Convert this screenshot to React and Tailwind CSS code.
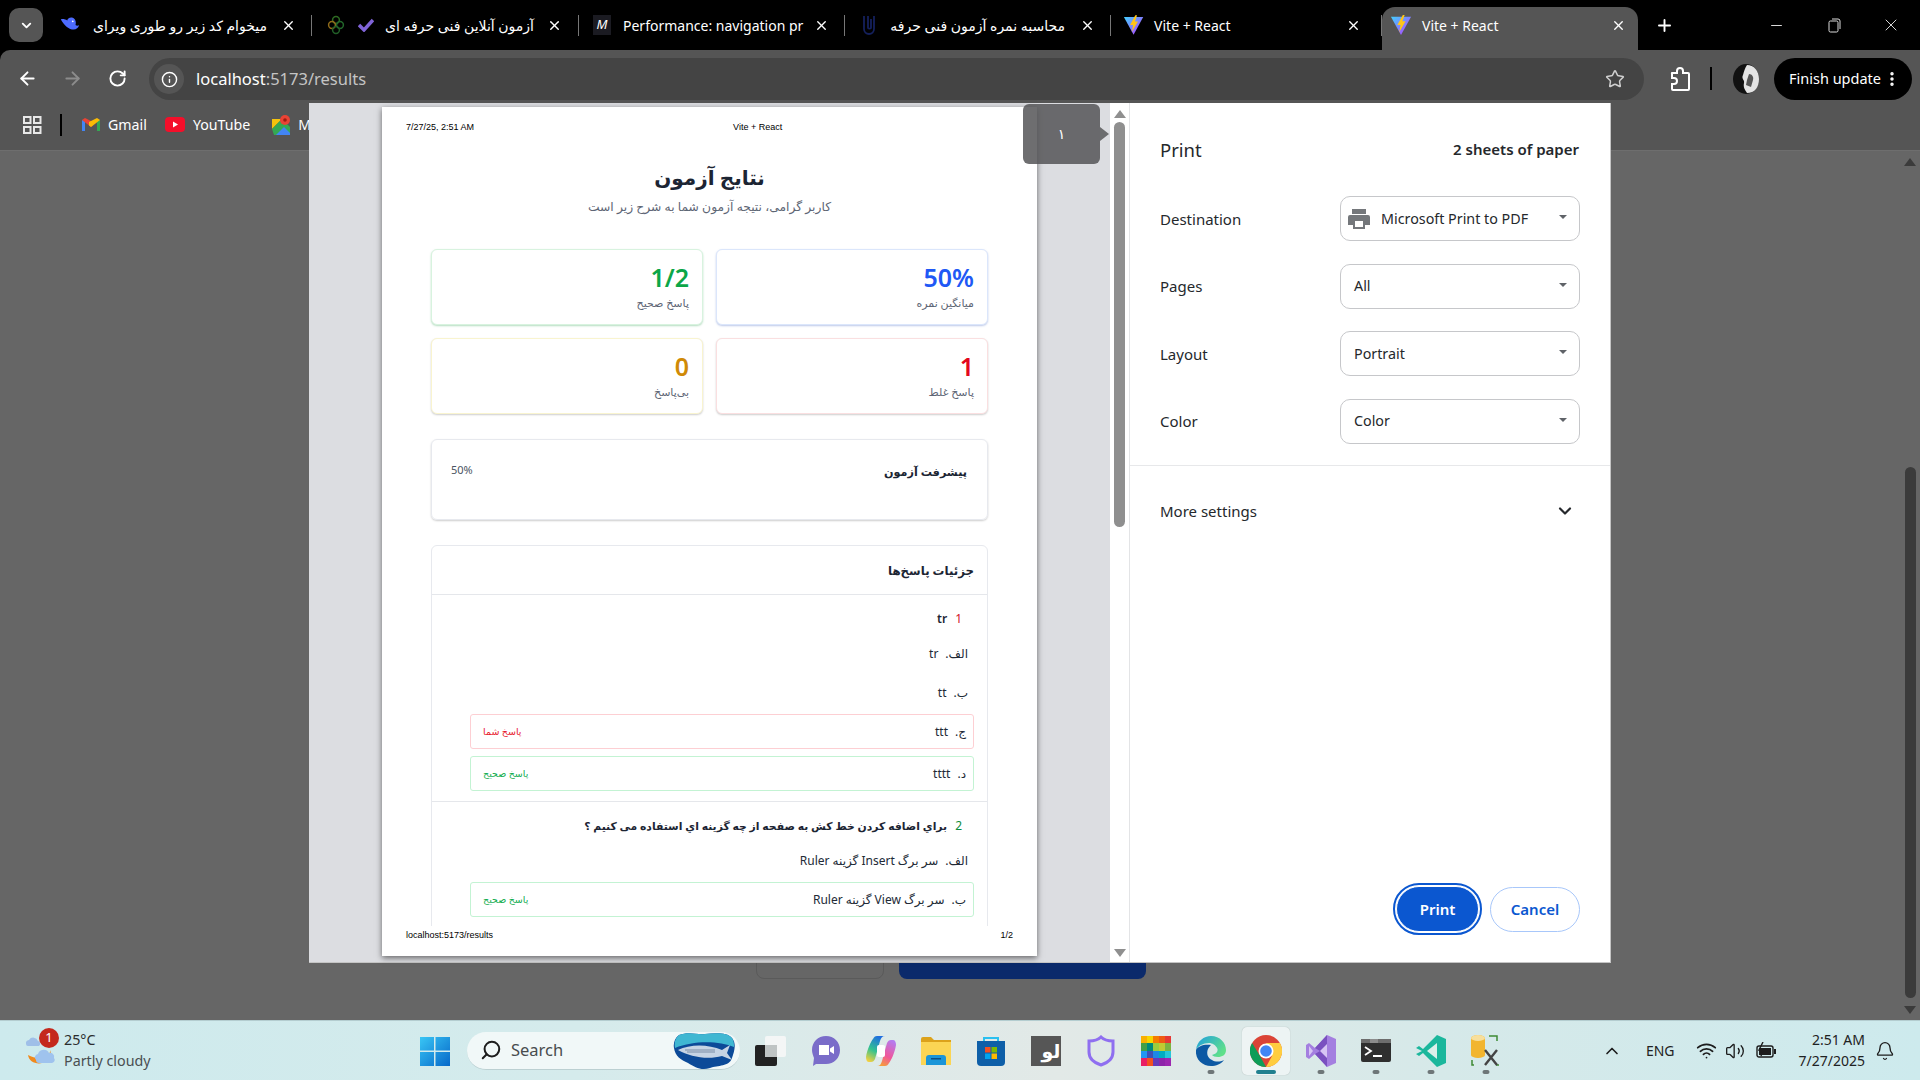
import React from "react";
import { ArrowLeft, ArrowRight, RotateCw, Star, Info, Plus, X, Minus, Search, ChevronUp, ChevronDown, Bell, Wifi, Volume2, EllipsisVertical } from "lucide-react";

const ui = "font-['Noto_Sans','DejaVu_Sans',sans-serif]";

const Sep = () => <div className="w-px h-[21px] bg-[#777] shrink-0" />;

const ViteIcon = ({ size = 22 }) => (
  <svg width={size} height={size} viewBox="0 0 24 24">
    <defs>
      <linearGradient id="vt" x1="0" y1="0" x2="1" y2="1">
        <stop offset="0" stopColor="#41d1ff" />
        <stop offset="1" stopColor="#bd34fe" />
      </linearGradient>
    </defs>
    <path d="M1 3 L23 3 L12 23 Z" fill="url(#vt)" />
    <path d="M14 1 L8 12 L11.5 12 L10 20 L17 8 L13.5 8 L16 1 Z" fill="#ffc517" />
  </svg>
);

const Tab = ({ width, icon, title, rtl, titleClass, right = "pr-3" }) => (
  <div className={`${width} h-[36px] flex items-center shrink-0`}>
    <div className={`flex-1 flex items-center min-w-0 pl-3 ${right}`}>
      {icon}
      <div className={`${titleClass} whitespace-nowrap text-[14px] text-white`} dir={rtl ? "rtl" : "ltr"}>
        {title}
      </div>
      <div className="flex-1" />
      <X size={15} strokeWidth={2.2} className="text-white shrink-0" />
    </div>
    <Sep />
  </div>
);

const TabStrip = () => (
  <div className="h-[50px] bg-black flex items-start shrink-0 relative pt-[7px]">
    <div className="w-[34px] h-[34px] mt-[1px] ml-[9px] mr-[7px] rounded-[10px] bg-[#555] flex items-center justify-center shrink-0">
      <ChevronDown size={15} strokeWidth={3} className="text-white" />
    </div>
    <Tab
      width="w-[262px]"
      rtl
      right="pr-[15px]"
      titleClass="w-[176px] ml-[10px]"
      title="میخوام کد زیر رو طوری ویرای"
      icon={
        <svg width="22" height="22" viewBox="0 0 24 24" className="shrink-0 ml-[-3px]">
          <path d="M2 6c4 7 9 11 14 11 3 0 5-2 6-5-1 1-3 1-4 0 1-3 0-7-3-8-3-1-6 1-6 3-2-1-5-2-7-1z" fill="#4d6bfe" />
          <circle cx="15" cy="8" r="1" fill="#fff" />
        </svg>
      }
    />
    <Tab
      width="w-[267px]"
      rtl
      right="pr-[16px]"
      titleClass="w-[154px] ml-[6px]"
      title="آزمون آنلاین فنی حرفه ای"
      icon={
        <span className="flex items-center shrink-0 gap-[13px] ml-[3px]">
          <svg width="18" height="20" viewBox="0 0 18 20">
            <circle cx="9" cy="5" r="3.4" fill="none" stroke="#2e6b22" strokeWidth="1.5" />
            <circle cx="5" cy="10" r="3.4" fill="none" stroke="#8f6b1a" strokeWidth="1.5" />
            <circle cx="13" cy="10" r="3.4" fill="none" stroke="#22682b" strokeWidth="1.5" />
            <circle cx="9" cy="15" r="3.4" fill="none" stroke="#215f27" strokeWidth="1.5" />
          </svg>
          <svg width="16" height="14" viewBox="0 0 16 14">
            <path d="M1 7 L6 12 L15 2" fill="none" stroke="#8064d8" strokeWidth="3.4" />
          </svg>
        </span>
      }
    />
    <Tab
      width="w-[266px]"
      right="pr-[15px]"
      titleClass="w-[178px] ml-[12px]"
      title="Performance: navigation pr"
      icon={
        <span className="w-[18px] h-[20px] bg-[#1b1b22] flex items-center justify-center text-[13px] italic text-white shrink-0 ml-[2px]">
          M
        </span>
      }
    />
    <Tab
      width="w-[266px]"
      rtl
      right="pr-[15px]"
      titleClass="w-[165px] ml-[23px]"
      title="محاسبه نمره آزمون فنی حرفه"
      icon={
        <svg width="16" height="24" viewBox="0 0 16 24" className="shrink-0 ml-[4px]">
          <path d="M3 3v13a5 5 0 0 0 10 0V3M7 3v12a2 2 0 0 0 3 0V6" fill="none" stroke="#14205c" strokeWidth="1.8" />
        </svg>
      }
    />
    <Tab
      width="w-[271px]"
      right="pr-[20px]"
      titleClass="w-[200px] ml-[10px]"
      title="Vite + React"
      icon={<ViteIcon />}
    />
    <div className="w-[256px] h-[43px] bg-[#555] rounded-t-[13px] flex items-center pl-[8px] pr-[12px] pb-[7px] shrink-0 relative">
      <ViteIcon />
      <span className="ml-[10px] text-[14px] text-white">Vite + React</span>
      <div className="flex-1" />
      <X size={15} strokeWidth={2.2} className="text-white" />
    </div>
    <div className="h-[36px] flex items-center ml-[17px]">
      <Plus size={19} strokeWidth={2.4} className="text-white" />
    </div>
    <div className="flex-1" />
    <div className="h-[36px] flex items-center text-white">
      <Minus size={17} strokeWidth={1.2} />
      <svg width="15" height="15" viewBox="0 0 15 15" className="ml-[42px]">
        <rect x="2" y="3" width="9" height="11" rx="1.4" fill="none" stroke="#ddd" strokeWidth="1" />
        <path d="M5 1h6a2 2 0 0 1 2 2v8" fill="none" stroke="#ddd" strokeWidth="1" />
      </svg>
      <X size={20} strokeWidth={1} className="ml-[39px] mr-[19px]" />
    </div>
  </div>
);

const Toolbar = () => (
  <div className="h-[53px] bg-[#555] flex items-start pt-[8px] shrink-0 rounded-tl-[10px]">
    <ArrowLeft size={21} strokeWidth={2.2} className="text-white ml-[17px] mt-[10px]" />
    <ArrowRight size={21} strokeWidth={2.2} className="text-[#8c8c8c] ml-[24px] mt-[10px]" />
    <RotateCw size={19} strokeWidth={2.4} className="text-white ml-[25px] mt-[11px]" />
    <div className="w-[1495px] h-[42px] rounded-full bg-[#444] ml-[22px] flex items-center pl-[5px] pr-[19px]">
      <div className="w-[30px] h-[30px] rounded-full bg-[#555] flex items-center justify-center">
        <Info size={17} strokeWidth={2} className="text-white" />
      </div>
      <span className="ml-[12px] text-[16.5px] text-white">
        localhost<span className="text-[#c4c4c4]">:5173/results</span>
      </span>
      <div className="flex-1" />
      <Star size={20} strokeWidth={1.8} className="text-[#cfcfcf]" />
    </div>
    <svg width="22" height="24" viewBox="0 0 22 24" className="ml-[25px] mt-[9px]">
      <path d="M3 6h5V4a3 3 0 0 1 6 0v2h5a1 1 0 0 1 1 1v15a1 1 0 0 1-1 1H4a1 1 0 0 1-1-1v-5h2a3 3 0 0 0 0-6H3V7a1 1 0 0 1 0-1z" fill="none" stroke="#fff" strokeWidth="2" />
    </svg>
    <div className="w-[2px] h-[23px] bg-black ml-[19px] mt-[9px]" />
    <svg width="26" height="30" viewBox="0 0 26 30" className="ml-[21px] mt-[6px]">
      <ellipse cx="13" cy="15" rx="13" ry="15" fill="#111" />
      <path d="M14 1c7 0 12 6 12 14s-4 14-12 14c-2-3-4-6-3-10 1-3-3-4-1-8 1-4 2-7 4-10z" fill="#e4e4e4" />
      <path d="M16 10c3 0 5 3 4 6l-2 7-5-2 1-5z" fill="#555" />
    </svg>
    <div className="w-[138px] h-[42px] rounded-full bg-black ml-[15px] flex items-center pl-[15px] text-white text-[14.5px]">
      Finish update
      <EllipsisVertical size={18} strokeWidth={2.6} className="ml-[2px]" />
    </div>
  </div>
);

const Bookmarks = () => (
  <div className="h-[48px] bg-[#555] border-b border-[#6e6e6e] flex items-center shrink-0 text-white text-[14.2px] pb-[4px]">
    <svg width="19" height="18" viewBox="0 0 19 18" className="ml-[23px]">
      <g fill="none" stroke="#e8e8e8" strokeWidth="2">
        <rect x="1" y="1" width="6.5" height="6" />
        <rect x="11" y="1" width="6.5" height="6" />
        <rect x="1" y="11" width="6.5" height="6" />
        <rect x="11" y="11" width="6.5" height="6" />
      </g>
    </svg>
    <div className="w-[2px] h-[22px] bg-black ml-[18px]" />
    <svg width="18" height="14" viewBox="0 0 18 14" className="ml-[20px]">
      <path d="M0 13V2l3 1v10z" fill="#4285f4" />
      <path d="M18 13V2l-3 1v10z" fill="#34a853" />
      <path d="M0 2 9 9l2-1.5V4L3 0z" fill="#ea4335" />
      <path d="M18 2 9 9l-2-1.5V4l8-4z" fill="#fbbc04" />
    </svg>
    <span className="ml-[8px]">Gmail</span>
    <svg width="20" height="15" viewBox="0 0 20 15" className="ml-[18px]">
      <rect width="20" height="15" rx="4" fill="#f40f2a" />
      <path d="M8 4.5v6l5-3z" fill="#fff" />
    </svg>
    <span className="ml-[8px]">YouTube</span>
    <svg width="18" height="20" viewBox="0 0 18 20" className="ml-[22px]">
      <path d="M0 4h10l-10 10z" fill="#f4c20d" />
      <path d="M0 14 10 4l8 8v8H2z" fill="#34a853" />
      <path d="M4 20 12 12l6 6v2z" fill="#4285f4" />
      <circle cx="13" cy="5" r="5" fill="#ea4335" />
      <circle cx="13" cy="5" r="1.8" fill="#9c1c12" />
    </svg>
    <span className="ml-[8px]">Maps</span>
  </div>
);

const StatCard = ({ value, label, color, border, shadow }) => (
  <div className={`h-[76px] rounded-[6px] border bg-white pl-[14px] pr-[13px] pt-[11px] flex flex-col items-start ${border} ${shadow}`}>
    <div className={`text-[25px] leading-[32px] font-semibold ${color}`}>{value}</div>
    <div className="text-[11px] leading-[18px] mt-[1px] text-[#5e6675]">{label}</div>
  </div>
);

const Option = ({ mark, text }) => (
  <div className="flex gap-[7px] text-[12px] leading-[20px] text-[#222a36] pr-[6px] mb-[19px]">
    <span>{mark}</span>
    <span>{text}</span>
  </div>
);

const BoxOption = ({ mark, text, note, tone, first }) => (
  <div className={`h-[35px] rounded-[3px] border flex items-center justify-between px-[7px] mb-[7px] text-[12px] text-[#222a36] bg-white ${first ? "-mt-[8px]" : ""} ${tone === "red" ? "border-[#fdcfd3]" : "border-[#c3f3d3]"}`}>
    <span className="flex gap-[7px]">
      <span>{mark}</span>
      <span>{text}</span>
    </span>
    <span className={`text-[9.5px] pl-[5px] pt-[1px] ${tone === "red" ? "text-[#e7182b]" : "text-[#12ad50]"}`}>{note}</span>
  </div>
);

const PrintPage = () => (
  <div className={`w-[655px] h-[849px] bg-white shadow-[0_2px_6px_rgba(0,0,0,0.55)] flex flex-col overflow-hidden ${ui}`}>
    <div className="h-[52px] px-[24px] pt-[13px] text-[9px] leading-[14px] text-black font-['Liberation_Sans',sans-serif] flex shrink-0">
      <span>7/27/25, 2:51 AM</span>
      <span className="ml-[259px]">Vite + React</span>
    </div>
    <div dir="rtl" className="flex-1 px-[49px] overflow-hidden">
      <div className="text-center">
        <h1 className="text-[20px] leading-[37px] font-bold text-[#1c2533]">نتایج آزمون</h1>
        <p className="text-[12.3px] leading-[22px] text-[#5e6675]">کاربر گرامی، نتیجه آزمون شما به شرح زیر است</p>
      </div>
      <div className="grid grid-cols-2 gap-x-[13px] gap-y-[13px] mt-[31px]">
        <StatCard value="50%" label="میانگین نمره" color="text-[#2058f5]" border="border-[#dbe6fb]" shadow="shadow-[0_1px_2px_rgba(90,120,200,0.4)]" />
        <StatCard value="1/2" label="پاسخ صحیح" color="text-[#0ba648]" border="border-[#d8f3df]" shadow="shadow-[0_1px_2px_rgba(70,170,100,0.4)]" />
        <StatCard value="1" label="پاسخ غلط" color="text-[#e3071c]" border="border-[#fadfe0]" shadow="shadow-[0_1px_2px_rgba(0,0,0,0.2)]" />
        <StatCard value="0" label="بی‌پاسخ" color="text-[#d08a06]" border="border-[#f9f4cf]" shadow="shadow-[0_1px_2px_rgba(0,0,0,0.2)]" />
      </div>
      <div className="h-[81px] mt-[25px] rounded-[6px] border border-[#e7e9ee] shadow-[0_1px_2px_rgba(0,0,0,0.2)] flex items-start justify-between pt-[20px] px-[20px]">
        <span className="text-[11.2px] leading-[24px] font-bold text-[#1c2533]">پیشرفت آزمون</span>
        <span className="text-[11px] leading-[20px] text-[#4b5563] -ml-[1px]">50%</span>
      </div>
      <div className="h-[420px] mt-[25px] rounded-t-[6px] border border-[#e7e9ee] overflow-hidden">
        <div className="h-[49px] border-b border-[#e5e7eb] flex items-center px-[13px] pt-[2px] text-[11.8px] font-bold text-[#1c2533]">
          جزئیات پاسخ‌ها
        </div>
        <div className="h-[207px] border-b border-[#e5e7eb] pt-[14px] px-[13px] flex flex-col">
          <div className="flex items-center gap-[8px] pr-[12px] text-[12px] leading-[20px] font-semibold text-[#1c2533] mb-[15px]">
            <span className="text-[#d2101f] font-normal">1</span>
            <span>tr</span>
          </div>
          <div className="pl-[25px]">
            <Option mark="الف." text="tr" />
            <Option mark="ب." text="tt" />
            <BoxOption mark="ج." text="ttt" note="پاسخ شما" tone="red" first />
            <BoxOption mark="د." text="tttt" note="پاسخ صحیح" tone="green" />
          </div>
        </div>
        <div className="pt-[14px] px-[13px] flex flex-col">
          <div className="flex items-center gap-[8px] pr-[12px] text-[10.8px] leading-[20px] font-bold text-[#1c2533] mb-[15px]">
            <span className="text-[#0c8c3c] font-normal text-[12px]">2</span>
            <span>براي اضافه كردن خط كش به صفحه از چه گزينه اي استفاده مى كنيم ؟</span>
          </div>
          <div className="pl-[25px]">
            <Option mark="الف." text="سر برگ Insert گزينه Ruler" />
            <BoxOption mark="ب." text="سر برگ View گزينه Ruler" note="پاسخ صحیح" tone="green" first />
          </div>
        </div>
      </div>
    </div>
    <div className="h-[30px] px-[24px] flex justify-between items-start pt-[2px] text-[9px] leading-[14px] text-black font-['Liberation_Sans',sans-serif] shrink-0">
      <span>localhost:5173/results</span>
      <span>1/2</span>
    </div>
  </div>
);

const Field = ({ label, value, printer }) => (
  <div className="flex items-center justify-between mb-[22.5px]">
    <span className="text-[15px] text-[#25282c] pt-[1px]">{label}</span>
    <div className="w-[240px] h-[45px] rounded-[10px] border border-[#c6c7ca] flex items-center pl-[13px] pr-[12px] text-[14.3px] text-[#25282c]">
      {printer && (
        <svg width="22" height="20" viewBox="0 0 22 20" className="-ml-[6px] mr-[11px]">
          <path d="M4 0h14v5H4z M2 6h18a2 2 0 0 1 2 2v8h-5v4H5v-4H0V8a2 2 0 0 1 2-2z" fill="#74777b" />
          <rect x="7" y="12" width="8" height="6" fill="#fff" />
        </svg>
      )}
      <span>{value}</span>
      <div className="flex-1" />
      <div className="w-0 h-0 border-x-[4.5px] border-x-transparent border-t-[4.5px] border-t-[#5f6368] mb-[3px]" />
    </div>
  </div>
);

const PrintSidebar = () => (
  <div className={`w-[481px] h-full bg-white border-l border-[#e3e4e6] flex flex-col ${ui}`}>
    <div className="h-[93px] flex items-center justify-between pl-[30px] pr-[31px]">
      <span className="text-[18.5px] text-[#25282c]">Print</span>
      <span className="text-[15px] font-semibold text-[#25282c]">2 sheets of paper</span>
    </div>
    <div className="pl-[30px] pr-[30px]">
      <Field label="Destination" value="Microsoft Print to PDF" printer />
      <Field label="Pages" value="All" />
      <Field label="Layout" value="Portrait" />
      <Field label="Color" value="Color" />
    </div>
    <div className="border-t border-[#e7e8ea] -mt-[1px] h-[92px] flex items-center justify-between pl-[30px] pr-[35px]">
      <span className="text-[15px] text-[#25282c]">More settings</span>
      <ChevronDown size={20} strokeWidth={2.6} className="text-[#25282c] -mt-[2px]" />
    </div>
    <div className="flex-1" />
    <div className="flex items-center justify-end gap-[8px] pr-[30px] pb-[27px]">
      <button className="w-[89px] h-[52px] rounded-full border-2 border-[#0b57d0] p-[1px]">
        <span className="w-full h-full rounded-full bg-[#0b57d0] flex items-center justify-center text-white text-[15px] font-semibold border border-white">Print</span>
      </button>
      <button className="w-[90px] h-[45px] rounded-full border border-[#a8c7fa] text-[#0b57d0] text-[15px] font-semibold">Cancel</button>
    </div>
  </div>
);

const PrintDialog = () => (
  <div className="absolute left-[309px] top-[103px] w-[1302px] h-[860px] flex bg-[#dcdde1] border-b border-r border-[#c4c4c4]">
    <div className="w-[820px] h-full relative pl-[73px] pt-[4px]">
      <PrintPage />
      <div className="absolute left-[714px] top-[1px] w-[77px] h-[60px] rounded-[6px] bg-[rgba(85,85,87,0.85)] flex items-center justify-center text-white text-[14px] font-['DejaVu_Sans',sans-serif]">
        ۱
        <div className="absolute -right-[9px] top-[23px] w-0 h-0 border-y-[7px] border-y-transparent border-l-[9px] border-l-[#6c6d6f]" />
      </div>
      <div className="absolute right-0 top-0 bottom-0 w-[19px] bg-white flex flex-col items-center pt-[7px]">
        <div className="w-0 h-0 border-x-[6px] border-x-transparent border-b-[8px] border-b-[#8f8f8f]" />
        <div className="w-[11px] h-[405px] rounded-full bg-[#8f8f8f] mt-[4px]" />
        <div className="flex-1" />
        <div className="w-0 h-0 border-x-[6px] border-x-transparent border-t-[8px] border-t-[#8f8f8f] mb-[5px]" />
      </div>
    </div>
    <PrintSidebar />
  </div>
);

const PageBehind = () => (
  <div className="flex-1 bg-[#666] relative min-h-0">
    <div className="absolute right-0 top-0 bottom-0 w-[20px] flex flex-col items-center pt-[7px]">
      <div className="w-0 h-0 border-x-[6px] border-x-transparent border-b-[8px] border-b-[#3b3b3b]" />
      <div className="w-[11px] h-[531px] rounded-full bg-[#3b3b3b] mt-[301px]" />
      <div className="flex-1" />
      <div className="w-0 h-0 border-x-[6px] border-x-transparent border-t-[8px] border-t-[#3b3b3b] mb-[6px]" />
    </div>
    <div className="flex pt-[780px] pl-[756px] gap-[15px]">
      <div className="w-[128px] h-[48px] rounded-[8px] border border-[#5a5a5a]" />
      <div className="w-[247px] h-[48px] rounded-[8px] bg-[#0b2a6b]" />
    </div>
  </div>
);

const AppIcon = ({ children, active, dot }) => (
  <div className={`w-[48px] h-[48px] mx-[3.5px] rounded-[5px] flex items-center justify-center relative shrink-0 ${active ? "bg-white/50 shadow-[0_0_1px_rgba(0,0,0,0.3)]" : ""}`}>
    {children}
    {dot && <div className={`absolute bottom-[1px] left-1/2 -translate-x-1/2 h-[3.5px] rounded-full ${active ? "w-[20px] bg-[#21808f]" : "w-[7px] bg-[#6e7678]"}`} />}
  </div>
);

const gridColors = [
  "#f9b000", "#f7d600", "#f57c00", "#ef5b12", "#e53935",
  "#43a047", "#00897b", "#9ccc3c", "#c0ca33", "#7cb342",
  "#2196f3", "#3f51b5", "#1e88e5", "#00acc1", "#26c6da",
  "#e91e63", "#f4511e", "#673ab7", "#8e24aa", "#9c27b0",
];

const Taskbar = () => (
  <div className={`h-[60px] shrink-0 border-t border-[#b4cdd0] bg-[linear-gradient(90deg,#cdeaed_0%,#d5ebec_30%,#e2e9e7_55%,#d6e9e9_75%,#cdeaed_100%)] flex items-center relative ${ui}`}>
    <div className="w-[420px] flex items-center pl-[25px] shrink-0 relative">
      <svg width="32" height="36" viewBox="0 0 32 36">
        <path d="M1 11a3.5 3.5 0 0 1 3-4 5 5 0 0 1 9 1 2.8 2.8 0 0 1 1 5H3a2 2 0 0 1-2-2z" fill="#9fbfe8" />
        <path d="M3 22c1 9 15 12 22 3l1-8c-3 9-14 10-23 5z" fill="#f08a1d" />
        <path d="M11 27a3.5 3.5 0 0 1 2-6 6 6 0 0 1 11-1 4 4 0 0 1 5 5 3 3 0 0 1-2 5H14a3 3 0 0 1-3-3z" fill="#9fc3ee" />
      </svg>
      <div className="absolute left-[39px] top-[-2px] w-[20px] h-[20px] rounded-full bg-[#c4281c] text-white text-[13px] flex items-center justify-center">1</div>
      <div className="ml-[7px] text-[14.3px] leading-[21px] text-[#2a2d2e] -mt-[1px]">
        <div>25°C</div>
        <div className="text-[#4a4f52]">Partly cloudy</div>
      </div>
    </div>
    <svg width="30" height="30" viewBox="0 0 30 30" className="shrink-0">
      <defs>
        <linearGradient id="win" x1="0" y1="0" x2="1" y2="1">
          <stop offset="0" stopColor="#39c6f5" />
          <stop offset="1" stopColor="#0668c9" />
        </linearGradient>
      </defs>
      <path d="M0 1h14v13.5H0zM15.5 1H30v13.5H15.5zM0 16h14v14H0zM15.5 16H30v14H15.5z" fill="url(#win)" />
    </svg>
    <div className="w-[273px] h-[38px] ml-[17px] rounded-full bg-[#f1f8f8] border-b border-[#bcd0d2] flex items-center pl-[13px] relative shrink-0">
      <Search size={22} strokeWidth={2.2} className="text-[#1d1d1d] -scale-x-100" />
      <span className="ml-[9px] text-[16.5px] text-[#484c4e]">Search</span>
      <svg width="64" height="38" viewBox="0 0 64 38" className="absolute right-[3px] top-0">
        <path d="M6 3c10-4 18 0 26-1 10-1 22-2 27 4 5 6 2 14 0 20-3 9-14 7-22 10-9 3-15-1-22-5C8 28 2 24 1 16 0 11 2 6 6 3z" fill="#0c4a98" />
        <path d="M6 3c10-4 18 0 26-1 10-1 22-2 27 4 2 3 2 6 2 9-14-6-40-7-59 1C1 11 2 6 6 3z" fill="#3fb7d2" />
        <path d="M5 18c12-6 30-6 44 0l8-5-3 8 5 7-10-4c-14 4-32 1-44-6z" fill="#c6d4e4" />
        <path d="M12 18h30M14 20h28" stroke="#7a8da6" strokeWidth="1" />
      </svg>
    </div>
    <div className="flex items-center ml-[3px]">
      <AppIcon>
        <svg width="32" height="30" viewBox="0 0 32 30">
          <rect x="10" y="0" width="21" height="21" rx="2" fill="#f4f6f6" />
          <rect x="0" y="9" width="22" height="21" rx="2" fill="#222" />
          <rect x="10" y="9" width="12" height="12" fill="#bfc4c4" />
        </svg>
      </AppIcon>
      <AppIcon>
        <svg width="28" height="30" viewBox="0 0 28 30">
          <path d="M14 0c8 0 14 6 14 14s-6 14-14 14H4l-3 2 1-8C1 19 0 17 0 14 0 6 6 0 14 0z" fill="#7a6cc9" />
          <path d="M7 9h10v10H7zM18 12.500l4-2.500v8l-4-2.500z" fill="#fff" />
        </svg>
      </AppIcon>
      <AppIcon>
        <svg width="30" height="30" viewBox="0 0 30 30">
          <defs>
            <linearGradient id="cpl" x1="0.6" y1="0" x2="0.2" y2="1">
              <stop offset="0" stopColor="#1f6ee0" />
              <stop offset="0.55" stopColor="#34c38f" />
              <stop offset="1" stopColor="#f4d03f" />
            </linearGradient>
            <linearGradient id="cpr" x1="0.7" y1="0" x2="0.3" y2="1">
              <stop offset="0" stopColor="#b57bee" />
              <stop offset="0.6" stopColor="#f0569a" />
              <stop offset="1" stopColor="#f59e3b" />
            </linearGradient>
          </defs>
          <path d="M11 0h8c-3 0-4 2-5 5l-5 18c-1 2-2 3-4 3H3c-2 0-3-2-3-5C1 14 5 5 7 3c1-2 2-3 4-3z" fill="url(#cpl)" />
          <path d="M19 30h-8c3 0 4-2 5-5l5-18c1-2 2-3 4-3h2c2 0 3 2 3 5-1 7-5 16-7 18-1 2-2 3-4 3z" fill="url(#cpr)" />
          <rect x="11" y="9" width="8" height="12" rx="2" fill="#fff" />
        </svg>
      </AppIcon>
      <AppIcon>
        <svg width="30" height="28" viewBox="0 0 30 28">
          <path d="M0 2a2 2 0 0 1 2-2h8l3 3h17v25H0z" fill="#dca21b" />
          <rect y="5" width="30" height="23" fill="#fbd554" />
          <path d="M5 28v-7a3 3 0 0 1 3-3h14a3 3 0 0 1 3 3v7z" fill="#1b95d8" />
          <rect x="10" y="21" width="10" height="1.5" fill="#0a4f86" />
        </svg>
      </AppIcon>
      <AppIcon>
        <svg width="30" height="30" viewBox="0 0 30 30">
          <path d="M8 7V2h14v5" fill="none" stroke="#2ac0f0" strokeWidth="2" />
          <path d="M1 5h28v21a4 4 0 0 1-4 4H5a4 4 0 0 1-4-4z" fill="#0e5fa8" />
          <rect x="9" y="11" width="5.5" height="5.5" fill="#f25022" />
          <rect x="15.5" y="11" width="5.5" height="5.5" fill="#7fba00" />
          <rect x="9" y="17.5" width="5.5" height="5.5" fill="#00a4ef" />
          <rect x="15.5" y="17.5" width="5.5" height="5.5" fill="#ffb900" />
        </svg>
      </AppIcon>
      <AppIcon>
        <div className="w-[30px] h-[30px] bg-[#565656] text-white text-[19px] font-bold leading-[30px] text-right overflow-hidden font-['DejaVu_Sans',sans-serif]" dir="rtl">لو</div>
      </AppIcon>
      <AppIcon>
        <svg width="30" height="32" viewBox="0 0 30 32">
          <path d="M15 2c3 3 8 4 12 4v11c0 7-6 11-12 13C9 28 3 24 3 17V6c4 0 9-1 12-4z" fill="none" stroke="#8f6ff0" strokeWidth="3" />
        </svg>
      </AppIcon>
      <AppIcon>
        <div className="w-[30px] h-[30px] grid grid-cols-5 grid-rows-4">
          {gridColors.map((c, index) => (
            <div key={index} style={{ backgroundColor: c }} />
          ))}
        </div>
      </AppIcon>
      <AppIcon dot>
        <svg width="32" height="32" viewBox="0 0 32 32">
          <defs>
            <linearGradient id="ed" x1="0" y1="0" x2="1" y2="0.6">
              <stop offset="0" stopColor="#1f9fe0" />
              <stop offset="1" stopColor="#5fe08a" />
            </linearGradient>
          </defs>
          <path d="M1 15C2 6 9 1 16 1c9 0 15 7 15 14 0 5-4 7-8 7-3 0-5-1-6-2 4-1 6-3 5.500-6C21 10 17 8 14 8 8 8 3 11 1 15z" fill="url(#ed)" />
          <path d="M1 15C0 25 8 31 16 31c5 0 10-2 13-6-4 2-9 2-12 0-4-2-6-6-4-11 1-2 2-3 3-4C9 9 3 11 1 15z" fill="#0c59a4" />
        </svg>
      </AppIcon>
      <AppIcon active dot>
        <svg width="32" height="32" viewBox="0 0 32 32">
          <circle cx="16" cy="16" r="16" fill="#db4437" />
          <path d="M16 32A16 16 0 0 1 2.100 8L10 21z" fill="#0f9d58" />
          <path d="M16 32A16 16 0 0 0 29.900 8H16l6 13z" fill="#ffcd40" />
          <circle cx="16" cy="16" r="7.500" fill="#fff" />
          <circle cx="16" cy="16" r="5.800" fill="#4285f4" />
        </svg>
      </AppIcon>
      <AppIcon dot>
        <svg width="30" height="32" viewBox="0 0 30 32">
          <path d="M21 0l9 4v24l-9 4-12-13-6 5-3-2V10l3-2 6 5z" fill="#a47fe0" />
          <path d="M21 0v32l-12-13 5-3-5-3z" fill="#7a50c0" />
          <path d="M21 9v14l-7-7z" fill="#d7c5f4" />
          <path d="M3 11v10l4-5z" fill="#d7c5f4" />
        </svg>
      </AppIcon>
      <AppIcon dot>
        <svg width="30" height="23" viewBox="0 0 30 23">
          <rect width="30" height="23" rx="2" fill="#2f2f2f" />
          <rect width="30" height="4" fill="#6d6d6d" />
          <rect x="9" width="8" height="4" fill="#8c8c8c" />
          <path d="M4 8l6 4-6 4" fill="none" stroke="#fff" strokeWidth="1.8" />
          <rect x="12" y="16" width="9" height="2" fill="#fff" />
        </svg>
      </AppIcon>
      <AppIcon dot>
        <svg width="30" height="32" viewBox="0 0 30 32">
          <path d="M21 0l9 4v24l-9 4L7 18l-4 3-3-2 6-3-6-3 3-2 4 3z" fill="#1bb79c" />
          <path d="M21 8v16l-10-8z" fill="#dcefea" />
        </svg>
      </AppIcon>
      <AppIcon dot>
        <svg width="30" height="32" viewBox="0 0 30 32">
          <path d="M0 3a7 3 0 0 1 14 0v17a7 3 0 0 1-14 0z" fill="#f2b52f" />
          <ellipse cx="7" cy="3" rx="7" ry="3" fill="#f7df9c" />
          <path d="M18 1h8v5M3 30h-2v-5M28 30h-3" fill="none" stroke="#3e8a34" strokeWidth="1.5" />
          <path d="M14 15l12 15M26 15L14 30" stroke="#444" strokeWidth="2.4" />
        </svg>
      </AppIcon>
    </div>
    <div className="flex-1" />
    <ChevronUp size={20} strokeWidth={2} className="text-[#1d1d1d] mr-[24px]" />
    <span className="text-[14px] text-[#222] mr-[21px]">ENG</span>
    <Wifi size={21} strokeWidth={2} className="text-[#1d1d1d] mr-[8px]" />
    <Volume2 size={20} strokeWidth={1.6} className="text-[#1d1d1d] mr-[11px]" />
    <svg width="20" height="18" viewBox="0 0 20 18" className="mr-[23px]">
      <rect x="1" y="4" width="16" height="11" rx="2" fill="none" stroke="#1d1d1d" strokeWidth="1.4" />
      <rect x="3" y="6" width="12" height="7" fill="#1d1d1d" />
      <rect x="18" y="7" width="2" height="5" fill="#1d1d1d" />
      <path d="M7 0 3 8h4l-2 6" fill="none" stroke="#1d1d1d" strokeWidth="1.4" />
    </svg>
    <div className="text-right text-[14px] leading-[21px] text-[#1f2223] -mt-[1px]">
      <div>2:51 AM</div>
      <div>7/27/2025</div>
    </div>
    <Bell size={20} strokeWidth={1.6} className="text-[#1d1d1d] ml-[10px] mr-[25px]" />
  </div>
);

const App = () => {
  return (
    <div className={`w-[1920px] h-[1080px] flex flex-col relative overflow-hidden bg-black ${ui}`}>
      <TabStrip />
      <Toolbar />
      <Bookmarks />
      <PageBehind />
      <Taskbar />
      <PrintDialog />
    </div>
  );
};

export default App;
